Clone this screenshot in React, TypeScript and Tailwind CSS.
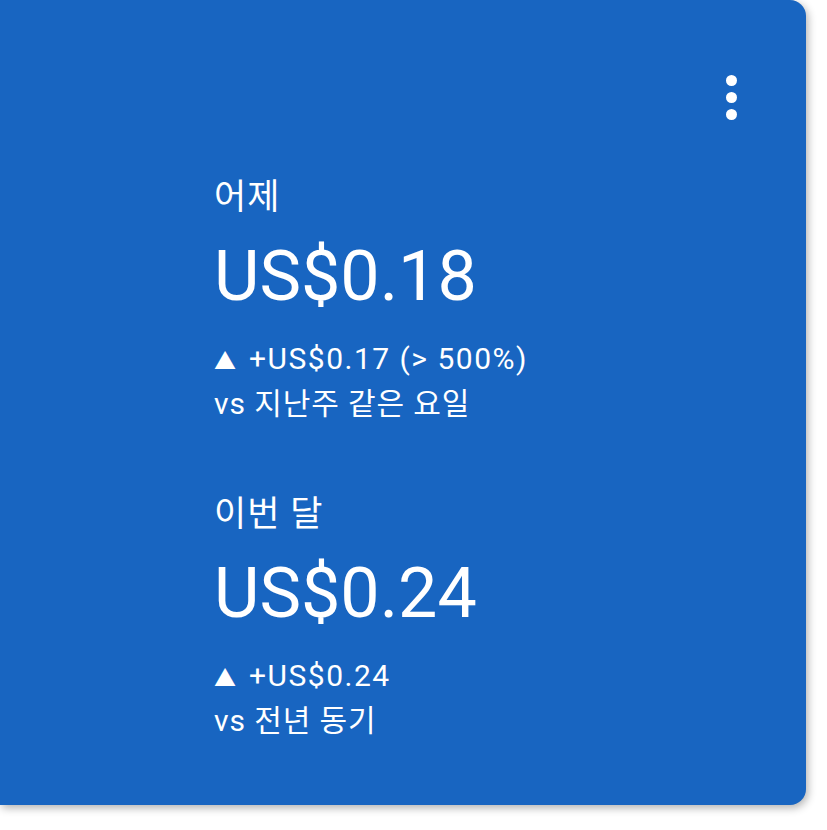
const font = { fontFamily: 'Roboto, "Noto Sans CJK KR", sans-serif' };

const Stat = ({ label, value, delta, compare }: { label: string; value: string; delta: string; compare: string }) => (
  <div className="flex flex-col text-white">
    <div className="text-[35px] leading-[36px] tracking-[0.03em]">{label}</div>
    <div className="mt-[25px] text-[70px] leading-[70px]">{value}</div>
    <div className="mt-[26px] text-[30px] leading-[44px] tracking-[0.05em]">
      <span className="text-[22px] mr-[13px] tracking-normal">▲</span>
      {delta}
    </div>
    <div className="text-[30px] leading-[40px] tracking-[0.03em]">{compare}</div>
  </div>
);

export default function App() {
  return (
    <div className="w-[827px] h-[830px] bg-white" style={font}>
      <div className="relative w-[806px] h-[805px] bg-[#1865c1] rounded-tr-[16px] rounded-br-[16px] shadow-[2px_3px_8px_rgba(0,0,0,0.3)] pl-[214px] pt-[180px]">
        <button className="absolute top-[75px] left-[726px] flex flex-col gap-[6px]">
          <span className="w-[11px] h-[11px] rounded-full bg-white" />
          <span className="w-[11px] h-[11px] rounded-full bg-white" />
          <span className="w-[11px] h-[11px] rounded-full bg-white" />
        </button>
        <div className="flex flex-col gap-[73px]">
          <Stat label="어제" value="US$0.18" delta="+US$0.17 (> 500%)" compare="vs 지난주 같은 요일" />
          <Stat label="이번 달" value="US$0.24" delta="+US$0.24" compare="vs 전년 동기" />
        </div>
      </div>
    </div>
  );
}
